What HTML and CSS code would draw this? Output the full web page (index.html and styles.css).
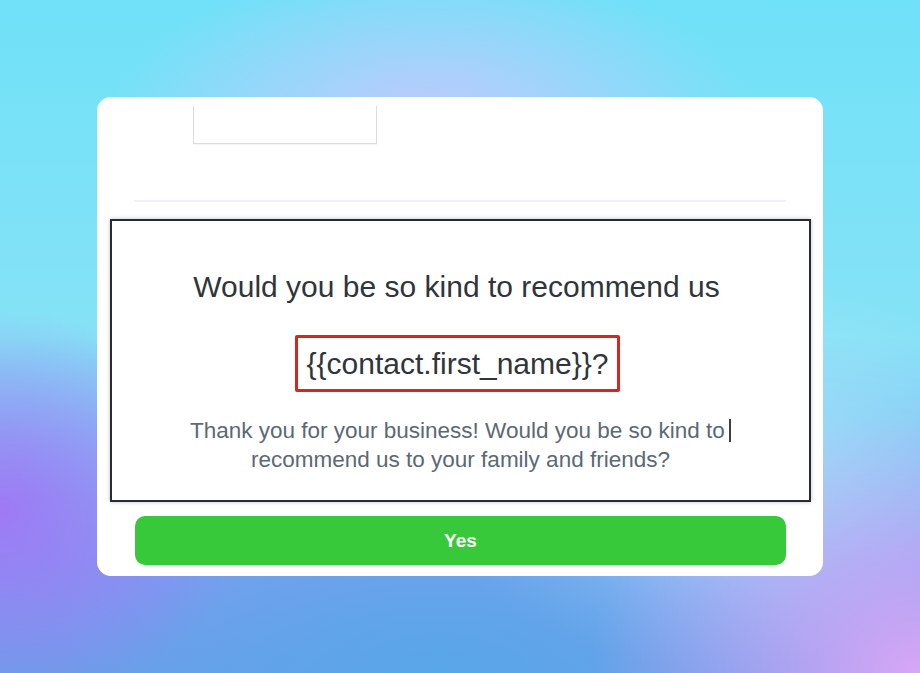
FILE: index.html
```html
<!DOCTYPE html>
<html lang="en">
<head>
<meta charset="utf-8">
<title>Recommend us</title>
<link rel="stylesheet" href="styles.css">
</head>
<body>
<div class="card">
  <div class="logo-box"></div>
  <div class="divider"></div>
  <div class="survey">
    <h1 class="title">Would you be so kind to recommend us</h1>
    <div class="token">{{contact.first_name}}?</div>
    <p class="desc">Thank you for your business! Would you be so kind to <span class="caret"></span><br>recommend us to your family and friends?</p>
  </div>
  <button class="yes">Yes</button>
</div>
</body>
</html>
```
FILE: styles.css
```css
html, body {
  margin: 0;
  height: 100%;
}
body {
  width: 920px;
  height: 673px;
  box-sizing: border-box;
  padding: 97px 97px 0 97px;
  font-family: "Liberation Sans", Arial, sans-serif;
  overflow: hidden;
  background:
    radial-gradient(ellipse 250px 200px at 0px 510px, rgba(160,118,245,0.95), rgba(160,118,245,0) 100%),
    radial-gradient(ellipse 330px 260px at 920px 673px, rgba(216,166,246,1), rgba(216,166,246,0) 100%),
    radial-gradient(ellipse 380px 200px at 440px 673px, rgba(88,166,232,1), rgba(88,166,232,0) 100%),
    radial-gradient(ellipse 320px 160px at 430px 120px, rgba(196,200,252,0.95), rgba(196,200,252,0) 100%),
    radial-gradient(ellipse 300px 200px at 720px 470px, rgba(170,230,250,0.9), rgba(170,230,250,0) 100%),
    linear-gradient(180deg, #6fe1f8 0%, #86e2f6 50%, #7d9ff0 84%, #6b9fe8 100%);
}
.card {
  width: 726px;
  height: 479px;
  background: #ffffff;
  border-radius: 14px;
  overflow: hidden;
  display: flex;
  flex-direction: column;
  align-items: flex-start;
}
.logo-box {
  margin: 9px 0 0 96px;
  width: 184px;
  height: 38px;
  box-sizing: border-box;
  border: 1px solid #dcdcdc;
  border-top: none;
  box-shadow: 0 1px 1px rgba(0,0,0,0.04);
}
.divider {
  margin: 56px 0 0 37px;
  width: 652px;
  height: 2px;
  background: #eef2f8;
}
.survey {
  margin: 17px 0 0 13px;
  width: 701px;
  height: 283px;
  box-sizing: border-box;
  border: 2px solid #262b36;
  box-shadow: 0 0 4px rgba(0,0,0,0.25);
  display: flex;
  flex-direction: column;
  align-items: center;
  padding-top: 49px;
}
.title {
  margin: 0;
  font-size: 30px;
  line-height: 34px;
  font-weight: normal;
  color: #30353b;
  padding-right: 8px;
  white-space: nowrap;
}
.token {
  margin: 31px 6px 0 0;
  width: 325px;
  height: 57px;
  box-sizing: border-box;
  border: 3px solid #d8261e;
  border-radius: 2px;
  font-size: 30px;
  line-height: 51px;
  color: #30353b;
  text-align: center;
  white-space: nowrap;
}
.desc {
  margin: 24px 0 0 0;
  font-size: 22.5px;
  line-height: 29px;
  color: #5c6875;
  text-align: center;
  white-space: nowrap;
}
.caret {
  display: inline-block;
  width: 2px;
  height: 23px;
  background: #3a3f47;
  vertical-align: -4px;
  margin-left: -2px;
}
.yes {
  margin: 14px 0 0 38px;
  width: 651px;
  height: 49px;
  border: none;
  border-radius: 10px;
  background: #38c93a;
  color: #ffffff;
  font-family: "Liberation Sans", Arial, sans-serif;
  font-weight: bold;
  font-size: 19px;
  padding: 0;
}
```
